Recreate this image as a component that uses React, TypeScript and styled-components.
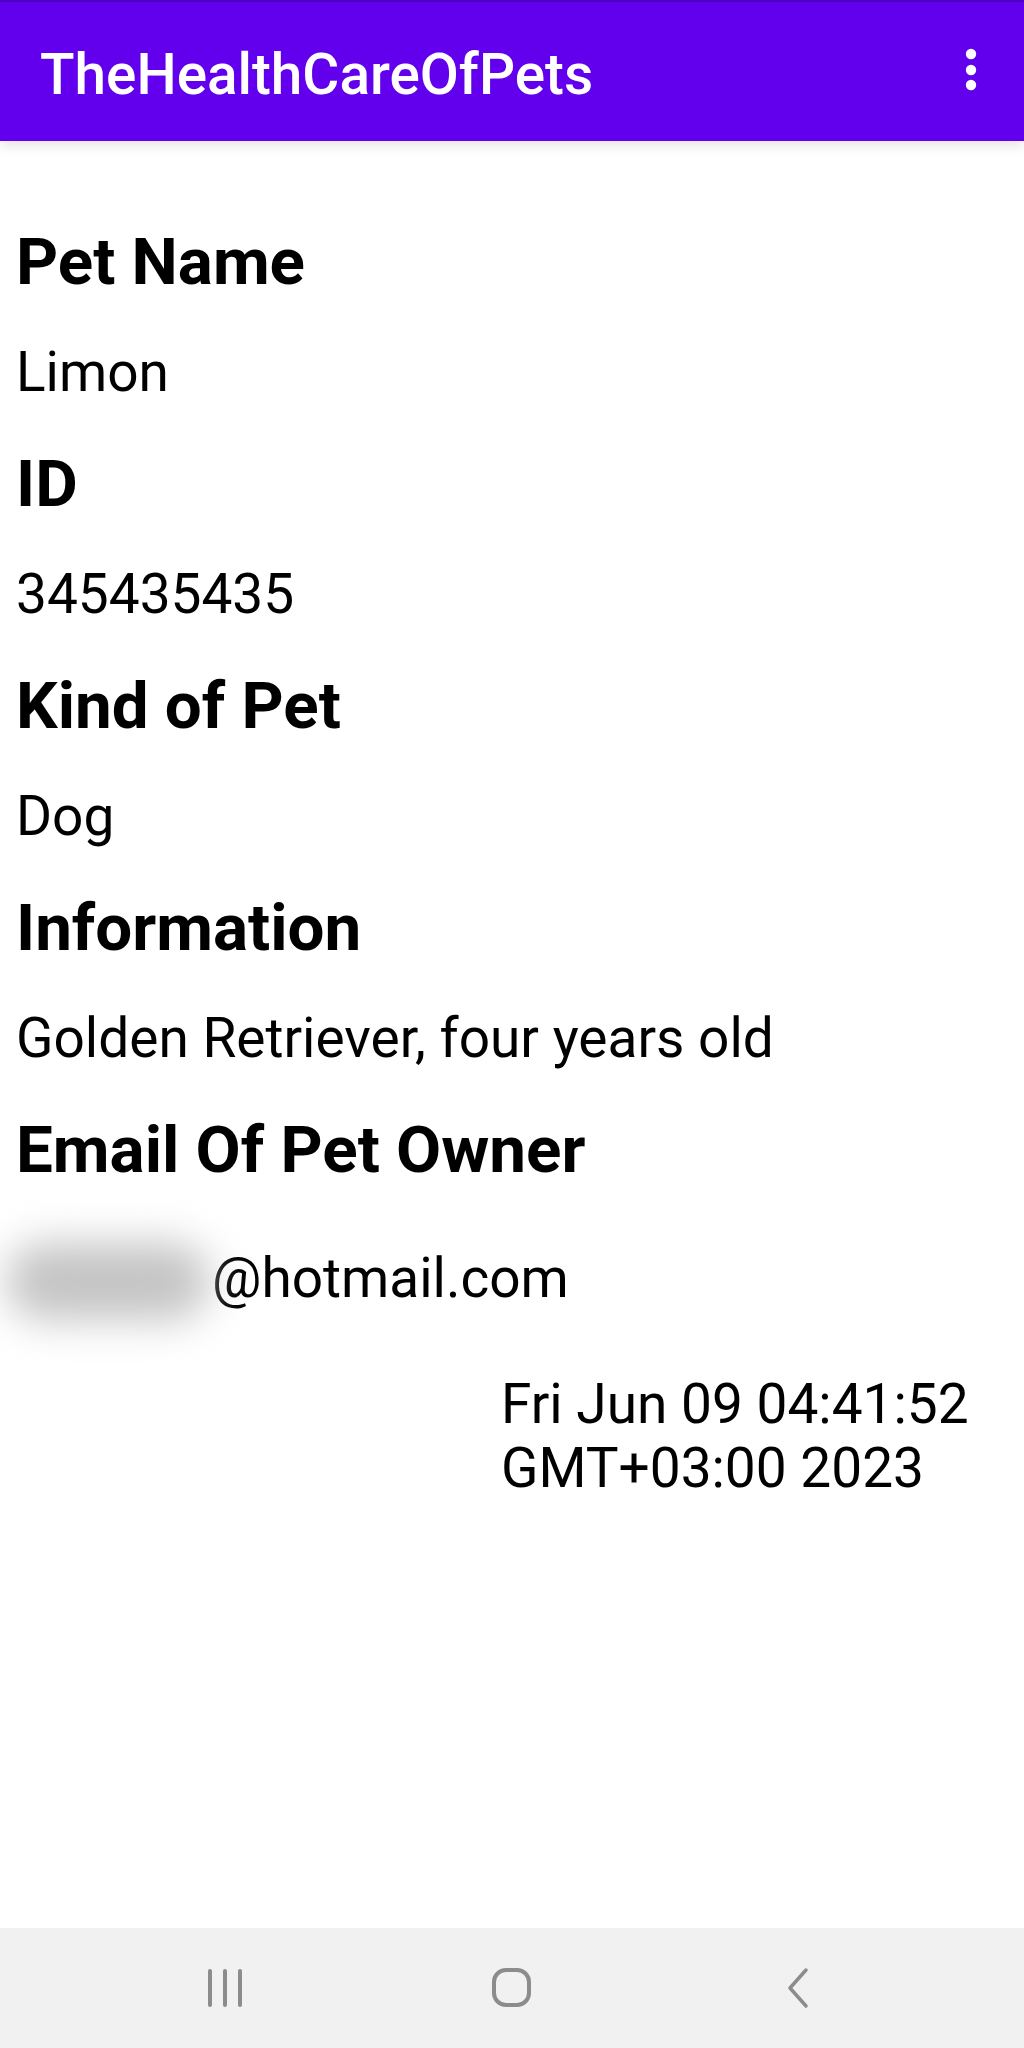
import React from "react";
import styled, { createGlobalStyle } from "styled-components";

const GlobalStyle = createGlobalStyle`
  html, body {
    margin: 0;
    padding: 0;
    background: #ffffff;
  }
  body {
    font-family: Roboto, "Noto Sans", "Liberation Sans", sans-serif;
    overflow-x: hidden;
  }
  #root {
    min-height: 2048px;
  }
`;

const Screen = styled.div`
  width: 1024px;
  min-height: 2048px;
  display: flex;
  flex-direction: column;
  background: #ffffff;
  overflow: hidden;
`;

const AppBar = styled.header`
  box-sizing: border-box;
  height: 141px;
  background: #6200ee;
  border-top: 2px solid #4c00bf;
  display: flex;
  align-items: center;
  justify-content: space-between;
  padding: 5px 40px 0 40px;
  box-shadow: 0 4px 12px rgba(0, 0, 0, 0.12);
  position: relative;
  z-index: 1;
`;

const Title = styled.h1`
  margin: 0;
  font-family: Roboto, "Noto Sans", sans-serif;
  font-weight: 500;
  font-size: 56.7px;
  color: #ffffff;
  letter-spacing: 0;
`;

const MenuButton = styled.div`
  width: 40px;
  height: 60px;
  display: flex;
  align-items: center;
  justify-content: center;
  margin-right: -7px;
  margin-top: -8px;
`;

const Content = styled.main`
  flex: 1;
  display: flex;
  flex-direction: column;
  gap: 42px;
  padding: 83px 0 0 16px;
`;

const Label = styled.h2`
  margin: 0;
  font-family: Roboto, "Noto Sans", sans-serif;
  font-weight: 700;
  font-size: 65.5px;
  line-height: 75px;
  color: #000000;
`;

const Value = styled.p<{ $extraTop?: number }>`
  margin: ${(p) => (p.$extraTop ? `${p.$extraTop}px 0 0 0` : "0")};
  font-family: Roboto, "Noto Sans", sans-serif;
  font-weight: 400;
  font-size: 55px;
  line-height: 63px;
  color: #000000;
  white-space: nowrap;
`;

const Redacted = styled.span`
  display: inline-block;
  position: relative;
  width: 196px;
  height: 63px;
  vertical-align: top;
  &::before {
    content: "";
    position: absolute;
    left: -10px;
    right: 2px;
    top: -4px;
    bottom: -10px;
    background: #c4c4c4;
    border-radius: 40px;
    filter: blur(20px);
  }
`;

const DateText = styled.p`
  margin: 20px 0 0 485px;
  width: 500px;
  font-family: Roboto, "Noto Sans", sans-serif;
  font-weight: 400;
  font-size: 55px;
  line-height: 64px;
  color: #000000;
`;

const NavBar = styled.nav`
  height: 120px;
  background: #f1f1f1;
  display: grid;
  grid-template-columns: repeat(3, 1fr);
  align-items: center;
`;

const NavSlot = styled.div<{ $offset: number }>`
  display: flex;
  justify-content: center;
  transform: translateX(${(p) => p.$offset}px);
`;

const DotsIcon = () => (
  <svg width="14" height="46" viewBox="0 0 14 46">
    <circle cx="7" cy="7" r="5.2" fill="#ffffff" />
    <circle cx="7" cy="23" r="5.2" fill="#ffffff" />
    <circle cx="7" cy="38" r="5.2" fill="#ffffff" />
  </svg>
);

const RecentsIcon = () => (
  <svg width="40" height="40" viewBox="0 0 40 40">
    <g stroke="#8c8c8c" strokeWidth="4" strokeLinecap="round">
      <line x1="5" y1="3" x2="5" y2="37" />
      <line x1="20" y1="3" x2="20" y2="37" />
      <line x1="35" y1="3" x2="35" y2="37" />
    </g>
  </svg>
);

const HomeIcon = () => (
  <svg width="42" height="42" viewBox="0 0 42 42">
    <rect x="3" y="3" width="35" height="35" rx="12" fill="none" stroke="#8c8c8c" strokeWidth="4" />
  </svg>
);

const BackIcon = () => (
  <svg width="26" height="42" viewBox="0 0 26 42">
    <polyline points="21,3 5,21 21,39" fill="none" stroke="#8c8c8c" strokeWidth="3.5" strokeLinecap="round" strokeLinejoin="round" />
  </svg>
);

const fields: { label: string; value: string }[] = [
  { label: "Pet Name", value: "Limon" },
  { label: "ID", value: "345435435" },
  { label: "Kind of Pet", value: "Dog" },
  { label: "Information", value: "Golden Retriever, four years old" },
];

export default function App() {
  return (
    <>
      <GlobalStyle />
      <Screen>
        <AppBar>
          <Title>TheHealthCareOfPets</Title>
          <MenuButton>
            <DotsIcon />
          </MenuButton>
        </AppBar>
        <Content>
          {fields.map((f) => (
            <React.Fragment key={f.label}>
              <Label>{f.label}</Label>
              <Value>{f.value}</Value>
            </React.Fragment>
          ))}
          <Label>Email Of Pet Owner</Label>
          <Value $extraTop={18}>
            <Redacted />
            @hotmail.com
          </Value>
          <DateText>Fri Jun 09 04:41:52 GMT+03:00 2023</DateText>
        </Content>
        <NavBar>
          <NavSlot $offset={54}>
            <RecentsIcon />
          </NavSlot>
          <NavSlot $offset={0}>
            <HomeIcon />
          </NavSlot>
          <NavSlot $offset={-55}>
            <BackIcon />
          </NavSlot>
        </NavBar>
      </Screen>
    </>
  );
}
